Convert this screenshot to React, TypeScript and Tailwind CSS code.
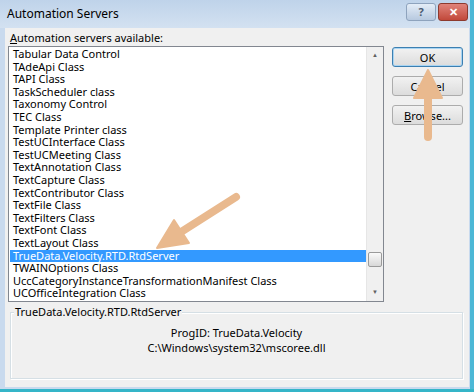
import React from "react";

const servers = [
  "Tabular Data Control",
  "TAdeApi Class",
  "TAPI Class",
  "TaskScheduler class",
  "Taxonomy Control",
  "TEC Class",
  "Template Printer class",
  "TestUCInterface Class",
  "TestUCMeeting Class",
  "TextAnnotation Class",
  "TextCapture Class",
  "TextContributor Class",
  "TextFile Class",
  "TextFilters Class",
  "TextFont Class",
  "TextLayout Class",
  "TrueData.Velocity.RTD.RtdServer",
  "TWAINOptions Class",
  "UccCategoryInstanceTransformationManifest Class",
  "UCOfficeIntegration Class",
];

const selected = 16;

const btn =
  "h-[20px] w-[71px] rounded-[3px] border border-[#acacac] bg-gradient-to-b from-[#f2f2f2] to-[#dcdcdc] text-[11px] leading-none text-black flex items-center justify-center";

export default function App() {
  return (
    <div
      className="relative w-[474px] h-[392px] overflow-hidden bg-[#c9daee]"
      style={{ fontFamily: '"Noto Sans", "Open Sans", sans-serif' }}
    >
      {/* title bar */}
      <div className="h-[28px] flex items-center pl-[7px] pr-[6px] bg-gradient-to-b from-[#bfd3ea] to-[#d3e1f1]">
        <span className="text-[12px] text-black">Automation Servers</span>
        <div className="ml-auto flex gap-[2px] self-start mt-[3px]">
          <div className="w-[30px] h-[18px] rounded-[3px] border border-[#8ea3bd] bg-gradient-to-b from-[#e4edf7] to-[#b7c9df] flex items-center justify-center text-[11px] font-bold text-[#4a5a70]">
            ?
          </div>
          <div className="w-[30px] h-[18px] rounded-[3px] border border-[#8d3a2e] bg-gradient-to-b from-[#e0837a] to-[#c1483a] flex items-center justify-center text-[11px] font-bold text-white">
            ✕
          </div>
        </div>
      </div>

      {/* body */}
      <div className="absolute left-[5px] top-[28px] w-[464px] h-[359px] bg-[#f0f0f0]">
        <div className="pt-[2px] pl-[5px] text-[11px] leading-[16px] text-black">
          <span className="underline">A</span>utomation servers available:
        </div>
        <div className="flex">
          {/* list */}
          <div className="ml-[3px] w-[376px] h-[256px] border border-[#828790] bg-white flex">
            <div className="flex-1 min-w-0 pt-[1px] pl-[1px] overflow-hidden">
              {servers.map((s, i) => (
                <div
                  key={i}
                  className={
                    "h-[12.6px] pl-[3px] text-[11px] leading-[12.6px] whitespace-nowrap " +
                    (i === selected ? "bg-[#3399ff] text-white" : "text-black")
                  }
                >
                  {s}
                </div>
              ))}
            </div>
            {/* scrollbar */}
            <div className="w-[17px] h-full bg-[#f0f0f0] border-l border-[#e6e6e6] flex flex-col items-center">
              <div className="h-[17px] flex items-center justify-center text-[6px] text-[#606060]">▲</div>
              <div className="flex-1 w-full relative">
                <div className="absolute left-[1px] top-[188px] w-[14px] h-[15px] rounded-[2px] border border-[#9a9a9a] bg-gradient-to-b from-[#fafafa] to-[#d8d8d8]" />
              </div>
              <div className="h-[17px] flex items-center justify-center text-[6px] text-[#606060]">▼</div>
            </div>
          </div>
          {/* buttons */}
          <div className="ml-[8px] mt-[1px] flex flex-col gap-[9px]">
            <div className={btn + " !border-[#3c7fb1] ring-1 ring-inset ring-[#a8d4f2]"}>OK</div>
            <div className={btn}>Cancel</div>
            <div className={btn}>
              <span>
                <span className="underline">B</span>rowse...
              </span>
            </div>
          </div>
        </div>

        {/* group box */}
        <div className="relative ml-[5px] mt-[10px] w-[453px] h-[67px] border border-[#d5dfe5] shadow-[inset_1px_1px_0_#ffffff,1px_1px_0_#ffffff]">
          <span className="absolute left-[3px] -top-[9px] px-[1px] bg-[#f0f0f0] text-[11px] leading-[16px] text-black">
            TrueData.Velocity.RTD.RtdServer
          </span>
          <div className="pt-[12px] text-center text-[11px] leading-[15px] text-black">
            <div>ProgID: TrueData.Velocity</div>
            <div>C:\Windows\system32\mscoree.dll</div>
          </div>
        </div>
      </div>

      {/* frame edges */}
      <div className="absolute right-0 top-0 w-[4px] h-full bg-[#4cb8d6]" />
      <div className="absolute left-0 bottom-0 w-full h-[3px] bg-[#35b5c8]" />

      {/* annotation arrows */}
      <svg className="absolute left-0 top-0" width="474" height="392" viewBox="0 0 474 392">
        <g fill="#e9b98e" stroke="#e9b98e" strokeLinejoin="round">
          <line x1="428" y1="137" x2="428" y2="96" strokeWidth="8" strokeLinecap="round" />
          <polygon points="428,70 414,98 442,98" strokeWidth="2" />
          <line x1="236" y1="197" x2="181" y2="232" strokeWidth="8" strokeLinecap="round" />
          <polygon points="157,248 189,243 174,220" strokeWidth="2" />
        </g>
      </svg>
    </div>
  );
}
